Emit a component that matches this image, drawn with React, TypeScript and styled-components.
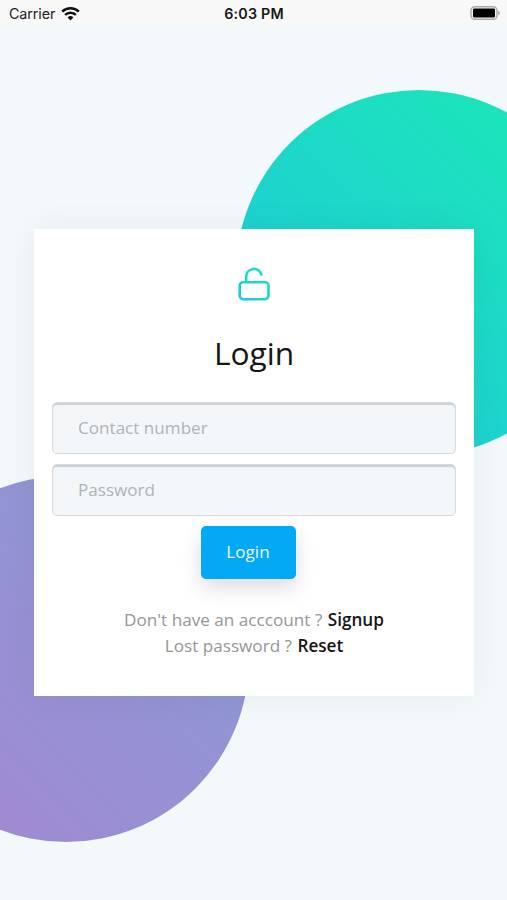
import React from "react";
import styled, { createGlobalStyle } from "styled-components";

const GlobalStyle = createGlobalStyle`
  *, *::before, *::after { box-sizing: border-box; }
  body { margin: 0; background: #f3f8fb; font-family: "Open Sans", sans-serif; }
`;

const Screen = styled.div`
  position: relative;
  width: 100%;
  height: 900px;
  overflow: hidden;
  background: #f3f8fb;
`;

const StatusBar = styled.header`
  position: relative;
  z-index: 1;
  display: grid;
  grid-template-columns: 1fr auto 1fr;
  align-items: center;
  height: 25px;
  padding: 2px 6px 0 9px;
  background: #f8f8f8;
  color: #222;
  font: 400 15px/22px Inter, sans-serif;
`;

const Carrier = styled.div`
  display: flex;
  align-items: center;
  gap: 6px;
  font-size: 14.3px;
  letter-spacing: -0.1px;
`;

const Clock = styled.div`
  margin-right: 2px;
  color: #161616;
  font-weight: 600;
  font-size: 14.3px;
  letter-spacing: 0.2px;
`;

const Battery = styled.svg`
  justify-self: end;
`;

const Circle = styled.div<{ $x: number; $y: number; $fill: string }>`
  position: absolute;
  left: ${(p) => p.$x}px;
  top: ${(p) => p.$y}px;
  width: 366px;
  height: 366px;
  border-radius: 50%;
  background: ${(p) => p.$fill};
`;

const Card = styled.main`
  position: relative;
  display: flex;
  flex-direction: column;
  align-items: center;
  width: 440px;
  height: 467px;
  margin: 204px 0 0 34px;
  padding: 36px 18px 0;
  background: #fff;
  box-shadow: 0 0 34px rgba(0, 0, 0, 0.05);
`;

const Title = styled.h1`
  margin: 25px 0 0;
  color: #151515;
  font-size: 31.7px;
  font-weight: 400;
  line-height: 50px;
`;

const Form = styled.form`
  display: flex;
  flex-direction: column;
  align-items: center;
  gap: 10px;
  width: 100%;
  margin-top: 24px;
`;

const Field = styled.input`
  display: block;
  width: 404px;
  height: 52px;
  padding: 0 25px 2px;
  border: 1px solid #d8dbde;
  border-radius: 5px;
  outline: 0;
  background: #f3f7fa;
  box-shadow: inset 0 2px 1px #cdd0d3;
  color: #333;
  font: 400 17.1px "Open Sans", sans-serif;
  &::placeholder { color: #afb3b6; opacity: 1; }
`;

const Submit = styled.button`
  width: 95px;
  height: 52.5px;
  margin-right: 12px;
  padding: 0 0 1px;
  border: 0;
  border-radius: 5px;
  background: #03a9f4;
  box-shadow: 0 9px 20px rgba(50, 30, 90, 0.16);
  color: #e9f8ff;
  font: 400 17.1px "Open Sans", sans-serif;
`;

const Links = styled.div`
  margin-top: 28.5px;
  color: #969696;
  font-size: 17.15px;
  line-height: 26px;
  text-align: center;
`;

const LinkRow = styled.p`
  margin: 0;
  white-space: nowrap;
`;

const Action = styled.a`
  margin-left: 1px;
  color: #151515;
  font-weight: 600;
`;

export default function App() {
  return (
    <>
      <GlobalStyle />
      <Screen>
        <Circle $x={236} $y={89.5} $fill="linear-gradient(45deg, #1fc8db 5%, #1be7b7 92%)" />
        <Circle $x={-117} $y={476} $fill="linear-gradient(45deg, #a18ad3 14%, #8b99d3 86%)" />
        <StatusBar>
          <Carrier>
            Carrier
            <svg width="19" height="14" viewBox="0 0 19 14" fill="none" stroke="#111" strokeWidth="2.5">
              <path d="M1.2 4.7a11.8 11.8 0 0 1 16.6 0" />
              <path d="M4.1 7.9a7.7 7.7 0 0 1 10.8 0" />
              <path d="M9.5 13.4 6.6 10.5a4.1 4.1 0 0 1 5.8 0z" fill="#111" stroke="none" />
            </svg>
          </Carrier>
          <Clock>6:03 PM</Clock>
          <Battery width="31" height="15" viewBox="0 0 31 15">
            <rect x="1" y="0.7" width="26" height="12.6" rx="3.8" fill="#f8f8f8" stroke="#aaa" strokeWidth="1.4" />
            <rect x="3" y="2.5" width="22" height="9" rx="1.2" fill="#000" />
            <path d="M28.2 4.8c2.3 .8 2.3 3.6 0 4.4z" fill="#aaa" />
          </Battery>
        </StatusBar>
        <Card>
          <svg width="36" height="38" viewBox="0 0 36 38" fill="none" stroke="url(#lock)" strokeWidth="2.6" strokeLinecap="round">
            <defs>
              <linearGradient id="lock" gradientUnits="userSpaceOnUse" x1="4" y1="35" x2="26" y2="2">
                <stop stopColor="#1fc8db" />
                <stop offset="1" stopColor="#1fe0bd" />
              </linearGradient>
            </defs>
            <rect x="3.7" y="17.2" width="28.8" height="17" rx="3.6" />
            <path d="M10.2 16.9V11.3a7.75 7.75 0 0 1 15.2-1.8" />
          </svg>
          <Title>Login</Title>
          <Form onSubmit={(e) => e.preventDefault()}>
            <Field type="text" placeholder="Contact number" />
            <Field type="password" placeholder="Password" />
            <Submit type="submit">Login</Submit>
          </Form>
          <Links>
            <LinkRow>Don't have an acccount ? <Action>Signup</Action></LinkRow>
            <LinkRow>Lost password ? <Action>Reset</Action></LinkRow>
          </Links>
        </Card>
      </Screen>
    </>
  );
}
